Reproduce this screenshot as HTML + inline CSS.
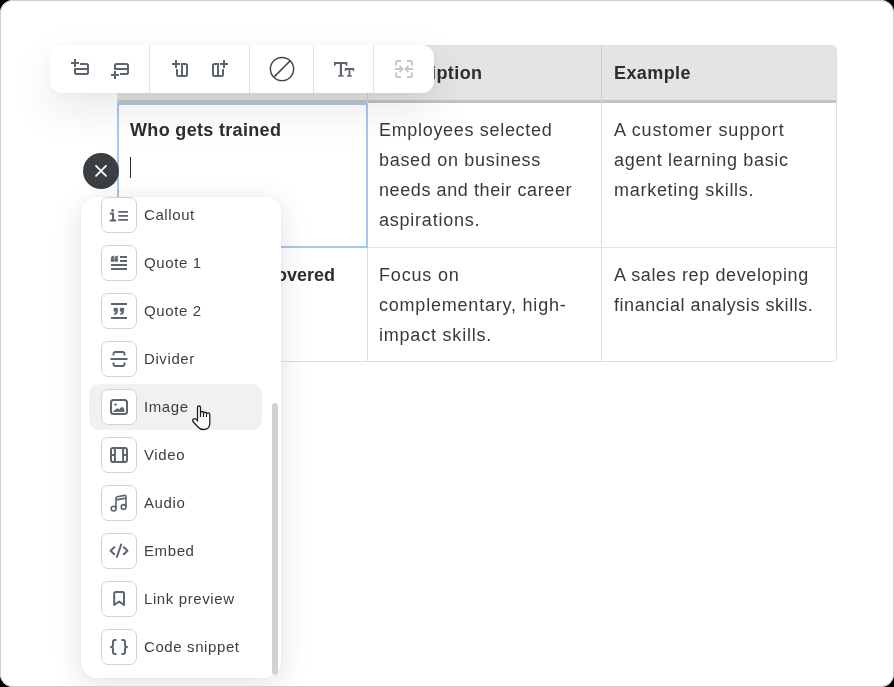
<!DOCTYPE html>
<html><head><meta charset="utf-8">
<style>
html,body{margin:0;padding:0;width:894px;height:687px;overflow:hidden;background:#000;}
body{font-family:"Liberation Sans",sans-serif;}
.page{will-change:transform;position:absolute;left:0;top:0;width:894px;height:687px;border-radius:13px;background:#fff;overflow:hidden;}
.frame{position:absolute;left:0;top:0;width:894px;height:687px;box-sizing:border-box;border:1px solid #cfcfcf;border-radius:13px;}
.abs{position:absolute;}
.t{position:absolute;white-space:nowrap;font-size:18px;line-height:30px;color:#363a3f;}
.b{font-weight:700;color:#2b2e32;}
.tbl{position:absolute;left:117px;top:45px;width:720px;height:317px;box-sizing:border-box;border:1px solid #dedede;border-radius:5px;overflow:hidden;background:#fff;}
.m{position:absolute;white-space:nowrap;font-size:15px;line-height:20px;color:#3b3e44;letter-spacing:0.6px;}
.ib{position:absolute;left:101px;width:36px;height:36px;box-sizing:border-box;border:1px solid #d3d3d3;border-radius:7px;background:#fff;}
svg{position:absolute;left:0;top:0;overflow:visible;}
</style></head>
<body>
<div class="page">
  <!-- table -->
  <div class="tbl">
    <div class="abs" style="left:0;top:0;width:720px;height:54px;background:#e4e4e4;"></div>
    <div class="abs" style="left:0;top:54px;width:720px;height:3px;background:#c3c3c3;"></div>
    <div class="abs" style="left:249px;top:0;width:1px;height:317px;background:#dcdcdc;"></div>
    <div class="abs" style="left:483px;top:0;width:1px;height:317px;background:#dcdcdc;"></div>
    <div class="abs" style="left:0;top:201px;width:720px;height:1px;background:#e2e2e2;"></div>
    <div class="abs" style="left:249px;top:0;width:1px;height:55px;background:#cdcdcd;"></div>
    <div class="abs" style="left:483px;top:0;width:1px;height:55px;background:#cdcdcd;"></div>
  </div>
  <!-- header texts -->
  <div class="t b" style="left:379px;top:58px;letter-spacing:0.4px;">Description</div>
  <div class="t b" style="left:614px;top:58px;letter-spacing:0.4px;">Example</div>
  <!-- row 1 -->
  <div class="t b" style="left:130px;top:115px;letter-spacing:0.33px;">Who gets trained</div>
  <div class="t" style="left:379px;top:115px;letter-spacing:0.68px;">Employees selected</div>
  <div class="t" style="left:379px;top:145px;letter-spacing:0.7px;">based on business</div>
  <div class="t" style="left:379px;top:175px;letter-spacing:0.59px;">needs and their career</div>
  <div class="t" style="left:379px;top:205px;letter-spacing:0.77px;">aspirations.</div>
  <div class="t" style="left:614px;top:115px;letter-spacing:0.86px;">A customer support</div>
  <div class="t" style="left:614px;top:145px;letter-spacing:0.68px;">agent learning basic</div>
  <div class="t" style="left:614px;top:175px;letter-spacing:0.72px;">marketing skills.</div>
  <!-- row 2 -->
  <div class="t b" style="left:214px;top:260px;">Skills covered</div>
  <div class="t" style="left:379px;top:260px;letter-spacing:0.83px;">Focus on</div>
  <div class="t" style="left:379px;top:290px;letter-spacing:0.79px;">complementary, high-</div>
  <div class="t" style="left:379px;top:320px;letter-spacing:0.79px;">impact skills.</div>
  <div class="t" style="left:614px;top:260px;letter-spacing:0.62px;">A sales rep developing</div>
  <div class="t" style="left:614px;top:290px;letter-spacing:0.55px;">financial analysis skills.</div>
  <!-- selected cell outline -->
  <div class="abs" style="left:117px;top:103px;width:251px;height:145px;box-sizing:border-box;border:2px solid #a3c8ef;"></div>
  <!-- caret -->
  <div class="abs" style="left:130px;top:157px;width:1px;height:21px;background:#2a2d31;"></div>

  <!-- toolbar -->
  <div class="abs" style="left:50px;top:45px;width:384px;height:48px;background:#fff;border-radius:12px;box-shadow:0 16px 44px rgba(0,0,0,0.095),0 2px 8px rgba(0,0,0,0.03);"></div>
  <div class="abs" style="left:149px;top:45px;width:1px;height:48px;background:#e3e3e3;"></div>
  <div class="abs" style="left:249px;top:45px;width:1px;height:48px;background:#e3e3e3;"></div>
  <div class="abs" style="left:313px;top:45px;width:1px;height:48px;background:#e3e3e3;"></div>
  <div class="abs" style="left:373px;top:45px;width:1px;height:48px;background:#e3e3e3;"></div>
  <svg width="894" height="687" viewBox="0 0 894 687" fill="none" stroke="#5d646f" stroke-width="2" stroke-linecap="butt" stroke-linejoin="round">
    <!-- row insert above -->
    <path d="M71 63H79M75 59V67"/>
    <path d="M80 64H86.5Q88 64 88 65.5V72.5Q88 74 86.5 74H76.5Q75 74 75 72.5V69H88"/>
    <!-- row insert below -->
    <path d="M111 75H119M115 71V79"/>
    <path d="M120 74H126.5Q128 74 128 72.5V65.5Q128 64 126.5 64H116.5Q115 64 115 65.5V69H128"/>
    <!-- col insert left -->
    <path d="M172 64H180M176 60V68"/>
    <path d="M181 64H185.5Q187 64 187 65.5V74.5Q187 76 185.5 76H178.5Q177 76 177 74.5V69M182 64V76"/>
    <!-- col insert right -->
    <path d="M220 64H228M224 60V68"/>
    <path d="M219 64H214.5Q213 64 213 65.5V74.5Q213 76 214.5 76H221.5Q223 76 223 74.5V69M218 64V76"/>
    <!-- slash circle -->
    <circle cx="282" cy="69" r="11.6" stroke="#3e4349" stroke-width="1.45"/>
    <path d="M274.4 76.6L290 61" stroke="#3e4349" stroke-width="1.5"/>
    <!-- merge (disabled) -->
    <g stroke="#c5c7ca">
      <path d="M401 61H397.5Q396 61 396 62.5V65.5M407 61H410.5Q412 61 412 62.5V65.5M396 72.5V75.5Q396 77 397.5 77H401M412 72.5V75.5Q412 77 410.5 77H407"/>
      <path d="M395 69H401.5M399.5 66L402.5 69L399.5 72M413 69H406.5M408.5 66L405.5 69L408.5 72"/>
    </g>
  </svg>
  <!-- Tt icon -->
  <svg width="894" height="687" viewBox="0 0 894 687" fill="#5d646f">
    <path d="M334 62H347.4V65.8H346.2Q345.8 63.9 344.6 63.9H342V75.2H343.6V76.7H338.2V75.2H339.8V63.9H336.8Q335.6 63.9 335.2 65.8H334Z"/>
    <path d="M344.8 68H354.2V71H353.1Q352.8 69.9 352 69.9H350.3V75.2H351.8V76.7H347.1V75.2H348.5V69.9H347Q346.2 69.9 345.9 71H344.8Z"/>
  </svg>

  <!-- close button -->
  <div class="abs" style="left:83px;top:153px;width:36px;height:36px;border-radius:50%;background:#3c3f42;"></div>
  <svg width="894" height="687" viewBox="0 0 894 687" fill="none" stroke="#fff" stroke-width="1.8" stroke-linecap="round">
    <path d="M96 165.8L106 175.8M106 165.8L96 175.8"/>
  </svg>

  <!-- menu -->
  <div class="abs" style="left:81px;top:197px;width:200px;height:481px;background:#fff;border-radius:16px;box-shadow:0 6px 30px rgba(0,0,0,0.12),0 0 3px rgba(0,0,0,0.04);overflow:hidden;">
  </div>
  <div class="abs" style="left:89px;top:384px;width:173px;height:46px;background:#f1f1f1;border-radius:10px;"></div>
  <div class="abs" style="left:272px;top:403px;width:6px;height:272px;background:#d2d2d2;border-radius:3px;"></div>

  <div class="ib" style="top:197px;"></div>
  <div class="ib" style="top:245px;"></div>
  <div class="ib" style="top:293px;"></div>
  <div class="ib" style="top:341px;"></div>
  <div class="ib" style="top:389px;"></div>
  <div class="ib" style="top:437px;"></div>
  <div class="ib" style="top:485px;"></div>
  <div class="ib" style="top:533px;"></div>
  <div class="ib" style="top:581px;"></div>
  <div class="ib" style="top:629px;"></div>

  <div class="m" style="left:144px;top:205px;">Callout</div>
  <div class="m" style="left:144px;top:253px;">Quote 1</div>
  <div class="m" style="left:144px;top:301px;">Quote 2</div>
  <div class="m" style="left:144px;top:349px;">Divider</div>
  <div class="m" style="left:144px;top:397px;">Image</div>
  <div class="m" style="left:144px;top:445px;">Video</div>
  <div class="m" style="left:144px;top:493px;">Audio</div>
  <div class="m" style="left:144px;top:541px;">Embed</div>
  <div class="m" style="left:144px;top:589px;">Link preview</div>
  <div class="m" style="left:144px;top:637px;">Code snippet</div>

  <!-- menu icons -->
  <svg width="894" height="687" viewBox="0 0 894 687" fill="none" stroke="#5d646f" stroke-width="1.8" stroke-linejoin="round">
    <!-- callout -->
    <circle cx="112.6" cy="210.4" r="1.35" fill="#5d646f" stroke="none"/>
    <path d="M109.8 213.6H113.1V220.4M109.8 220.6H116.2" stroke-width="2"/>
    <path d="M118.3 211.8H128M118.3 215.9H128M118.3 219.9H128" stroke-width="1.8"/>
    <!-- quote 1 -->
    <path d="M120 257H127M120 261H127M111 265H127M111 269H127"/>
    <path d="M111 261.6V258.6Q111 255.9 114.2 255.8V257.4Q112.9 257.6 112.8 258.4H114.2V261.6ZM114.7 261.6V258.6Q114.7 255.9 117.9 255.8V257.4Q116.6 257.6 116.5 258.4H117.9V261.6Z" fill="#5d646f" stroke="#5d646f" stroke-width="0.3"/>
    <!-- quote 2 -->
    <path d="M111 304H127M111 318H127"/>
    <path d="M113.9 308H117.7V311.6Q117.7 314.6 114.3 314.8V313.2Q115.8 312.9 115.9 311.6H113.9ZM120.1 308H123.9V311.6Q123.9 314.6 120.5 314.8V313.2Q122 312.9 122.1 311.6H120.1Z" fill="#5d646f" stroke="#5d646f" stroke-width="0.3"/>
    <!-- divider -->
    <path d="M113.5 355.5V354Q113.5 352 115.5 352H122.5Q124.5 352 124.5 354V355.5M110.5 359H127.5M113.5 362.5V364Q113.5 366 115.5 366H122.5Q124.5 366 124.5 364V362.5" stroke-width="1.9"/>
    <!-- image -->
    <rect x="111" y="400" width="16" height="14" rx="2.5" stroke-width="2"/>
    <circle cx="115.6" cy="404.6" r="1.2" fill="#5d646f" stroke="none"/>
    <path d="M113.5 411.5L116 409.6L117.5 408.6L119 409.8L121.8 407.2L123.6 408.3L124.2 411.5Z" fill="#5d646f" stroke="#5d646f" stroke-width="0.8"/>
    <!-- video -->
    <rect x="111" y="448" width="16" height="14" rx="2" stroke-width="2"/>
    <path d="M114.9 448V462M123.1 448V462M111 455H114.9M123.1 455H127" stroke-width="2"/>
    <!-- audio -->
    <circle cx="113.6" cy="508.6" r="2.4" stroke-width="1.6"/>
    <circle cx="123.6" cy="507" r="2.4" stroke-width="1.6"/>
    <path d="M116 508.6V498.2Q116 497 117.2 496.8L124.6 495.4Q126 495.2 126 496.6V507M116 499.9L126 498.1" stroke-width="1.6"/>
    <!-- embed -->
    <path d="M114.3 547.2L110.6 550.7L114.3 554.3M123.8 547.2L127.5 550.7L123.8 554.3M121.2 544.5L116.9 557" stroke-width="2" stroke-linecap="round"/>
    <!-- link preview -->
    <path d="M114.2 605V593.5Q114.2 592 115.7 592H122.5Q124 592 124 593.5V605L119.1 601.5Z" stroke-width="2"/>
    <!-- code snippet -->
    <path d="M116.5 640H115Q113 640 113 642V645Q113 647 111 647Q113 647 113 649V652Q113 654 115 654H116.5M121.5 640H123Q125 640 125 642V645Q125 647 127 647Q125 647 125 649V652Q125 654 123 654H121.5" stroke-width="2"/>
  </svg>

  <!-- hand cursor -->
  <svg width="894" height="687" viewBox="0 0 894 687">
    <path d="M197.5 421V407.5Q197.5 406 199 406Q200.5 406 200.5 407.5V412.5Q200.5 411.5 202 411.5Q203.5 411.5 203.5 412.8V413.2Q203.5 412.1 205 412.1Q206.5 412.1 206.5 413.3V413.8Q206.5 412.9 208.1 412.9Q209.8 412.9 209.8 414.6V423Q209.8 429.5 203.5 429.5Q200 429.5 198 427L193 421.5Q192 420 193.5 419Q195 418.2 196.5 419.5Z" fill="#fff" stroke="#1b1e2a" stroke-width="1.3" stroke-linejoin="round"/>
    <path d="M200.5 412.5V417M203.5 413V417M206.5 413.5V417" stroke="#1b1e2a" stroke-width="1.2" fill="none"/>
  </svg>
</div>
<div class="frame"></div>
</body></html>
